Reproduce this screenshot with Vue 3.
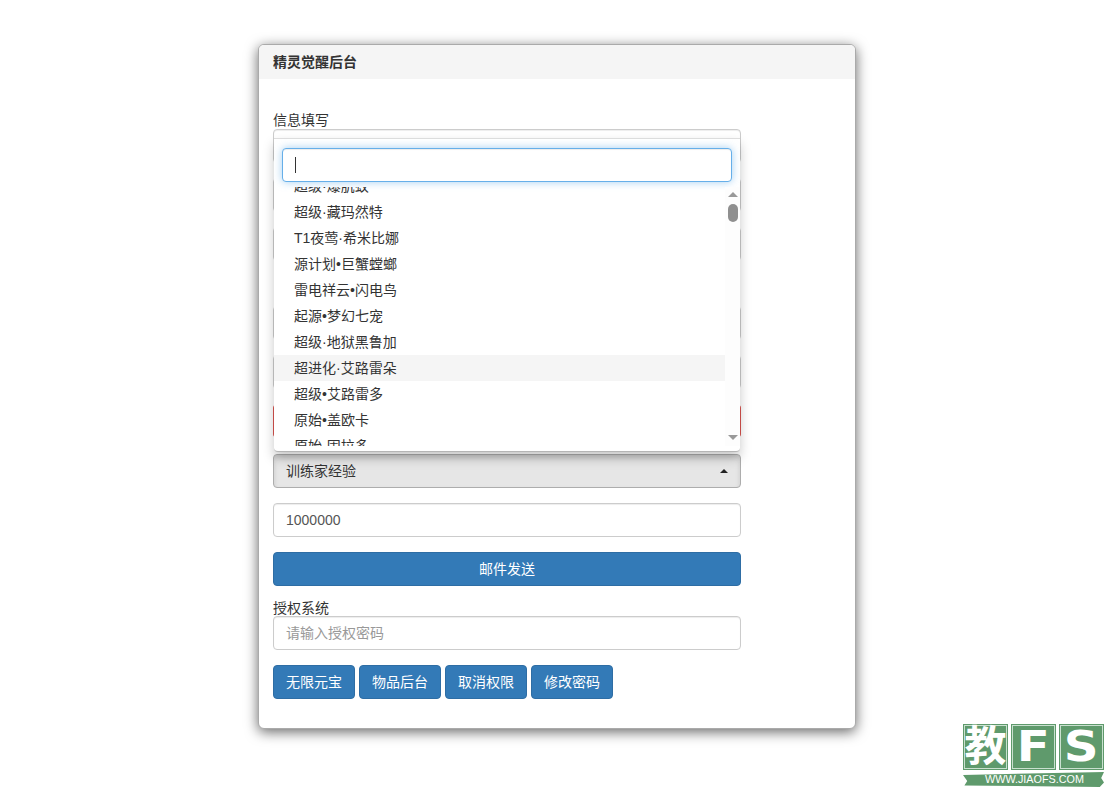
<script setup>
import { ref } from 'vue'

const pets = ref([
  '超级·爆肌蚊',
  '超级·藏玛然特',
  'T1夜莺·希米比娜',
  '源计划•巨蟹螳螂',
  '雷电祥云•闪电鸟',
  '起源•梦幻七宠',
  '超级·地狱黑鲁加',
  '超进化·艾路雷朵',
  '超级•艾路雷多',
  '原始•盖欧卡',
  '原始·固拉多'
])
const activeIndex = ref(7)
const amount = ref('1000000')
const actions = ['无限元宝', '物品后台', '取消权限', '修改密码']
</script>

<template>
  <div class="page">
    <div class="panel">
      <div class="panel-heading">精灵觉醒后台</div>
      <div class="panel-body">
        <label class="label">信息填写</label>
        <div class="control"></div>
        <div class="control"></div>
        <div class="control"></div>
        <div class="label label-mid"></div>
        <div class="control"></div>
        <div class="control"></div>
        <div class="btn btn-danger"></div>

        <div class="control control-open">
          <span>训练家经验</span>
          <i class="caret"></i>
        </div>
        <input class="control input" v-model="amount" type="text" />
        <button class="btn btn-primary btn-block" type="button">邮件发送</button>

        <label class="label label-auth">授权系统</label>
        <input class="control input" type="text" placeholder="请输入授权密码" />
        <div class="actions">
          <button v-for="a in actions" :key="a" class="btn btn-primary btn-action" type="button">{{ a }}</button>
        </div>

        <!-- 下拉菜单 -->
        <div class="dropdown">
          <div class="search">
            <input class="search-input" type="text" />
            <span class="cursor"></span>
          </div>
          <div class="list-wrap">
            <ul class="list">
              <li v-for="(p, i) in pets" :key="p" :class="{ active: i === activeIndex }">{{ p }}</li>
            </ul>
            <div class="scrollbar">
              <i class="arrow-up"></i>
              <i class="thumb"></i>
              <i class="arrow-down"></i>
            </div>
          </div>
        </div>
      </div>
    </div>

    <div class="logo">
      <div class="logo-blocks">
        <span class="logo-cell">教</span>
        <span class="logo-cell"><b class="wide">F</b></span>
        <span class="logo-cell"><b class="wide">S</b></span>
      </div>
      <div class="logo-url">WWW.JIAOFS.COM</div>
    </div>
  </div>
</template>

<style>
html, body {
  margin: 0;
  background: #fff;
  overflow: hidden;
}
</style>

<style scoped>
* {
  box-sizing: border-box;
}

.page {
  position: relative;
  width: 1110px;
  height: 791px;
  padding: 44px 0 0 258px;
  font-family: "Liberation Sans", "Noto Sans CJK SC", sans-serif;
  font-size: 14px;
  color: #333;
}

/* 面板 */
.panel {
  width: 598px;
  height: 685px;
  background: #fff;
  border-radius: 6px;
  border: 1px solid #aaa;
  box-shadow: 0 3px 13px rgba(0, 0, 0, 0.6);
}

.panel-heading {
  height: 34px;
  padding: 0 14px;
  line-height: 34px;
  font-weight: 700;
  font-size: 14px;
  background: #f5f5f5;
  border-radius: 5px 5px 0 0;
}

.panel-body {
  position: relative;
  width: 496px;
  padding: 33px 0 0 14px;
}

.label {
  display: block;
  height: 17px;
  line-height: 17px;
}

.label-mid {
  height: 30px;
}

.label-auth {
  height: 16px;
  margin-top: -1px;
}

.control {
  display: block;
  width: 468px;
  height: 34px;
  margin-bottom: 15px;
  padding: 6px 12px;
  font: inherit;
  line-height: 20px;
  color: #555;
  background: #fff;
  border: 1px solid #ccc;
  border-radius: 4px;
  box-shadow: inset 0 1px 1px rgba(0, 0, 0, 0.075);
  outline: none;
}

.input::placeholder {
  color: #999;
}

.control-open {
  display: flex;
  align-items: center;
  justify-content: space-between;
  color: #333;
  background: #e6e6e6;
  border-color: #adadad;
  box-shadow: inset 0 3px 5px rgba(0, 0, 0, 0.125);
}

.caret {
  width: 0;
  height: 0;
  border-left: 4px solid transparent;
  border-right: 4px solid transparent;
  border-bottom: 4px solid #222;
}

.btn {
  height: 34px;
  padding: 6px 12px;
  font: inherit;
  line-height: 20px;
  border: 1px solid transparent;
  border-radius: 4px;
}

.btn-danger {
  width: 468px;
  margin-bottom: 16px;
  background: #c9302c;
  border-color: #d9534f;
}

.btn-primary {
  color: #fff;
  background: #337ab7;
  border-color: #2e6da4;
}

.btn-block {
  display: block;
  width: 468px;
  margin-bottom: 15px;
  text-align: center;
}

.actions {
  display: flex;
  gap: 4px;
}

.btn-action {
  width: 82px;
  padding: 6px 0;
  text-align: center;
}

/* 下拉菜单 */
.dropdown {
  position: absolute;
  top: 59px;
  left: 15px;
  width: 466px;
  height: 314px;
  background: #fff;
  border-top: 1px solid #ddd;
  border-bottom: 1px solid #b5b5b5;
  border-radius: 0 0 4px 4px;
  box-shadow: 0 6px 12px rgba(0, 0, 0, 0.22);
}

.search {
  position: relative;
  padding: 9px 8px 0;
}

.search-input {
  display: block;
  width: 450px;
  height: 34px;
  padding: 6px 12px;
  border: 1px solid #66afe9;
  border-radius: 4px;
  outline: none;
  box-shadow: inset 0 1px 1px rgba(0, 0, 0, 0.075), 0 0 8px rgba(102, 175, 233, 0.6);
}

.cursor {
  position: absolute;
  left: 21px;
  top: 18px;
  width: 1px;
  height: 16px;
  background: #333;
}

.list-wrap {
  position: relative;
  height: 259px;
  margin-top: 5px;
  overflow: hidden;
}

.list {
  list-style: none;
  margin: -14px 0 0;
  padding: 0;
  width: 451px;
}

.list li {
  height: 26px;
  padding: 0 20px;
  line-height: 26px;
  white-space: nowrap;
  color: #333;
}

.list li.active {
  background: #f5f5f5;
}

.scrollbar {
  position: absolute;
  top: 0;
  right: 0;
  width: 15px;
  height: 100%;
  background: #fdfdfd;
}

.arrow-up,
.arrow-down {
  position: absolute;
  left: 3px;
  width: 0;
  height: 0;
  border-left: 5px solid transparent;
  border-right: 5px solid transparent;
}

.arrow-up {
  top: 5px;
  border-bottom: 5px solid #999;
}

.arrow-down {
  bottom: 6px;
  border-top: 5px solid #999;
}

.thumb {
  position: absolute;
  top: 17px;
  left: 3px;
  width: 10px;
  height: 18px;
  background: #8f8f8f;
  border-radius: 5px;
}

/* 角标 */
.logo {
  position: absolute;
  left: 963px;
  top: 724px;
  width: 141px;
}

.logo-blocks {
  display: flex;
  gap: 3px;
}

.logo-cell {
  width: 45px;
  height: 46px;
  background: #5f9a6c;
  color: #fff;
  font-family: "DejaVu Sans", "Noto Sans CJK SC", sans-serif;
  font-weight: 700;
  font-size: 42px;
  line-height: 45px;
  text-align: center;
  box-shadow: inset 0 0 0 1px #5f9a6c, inset 0 0 0 2px #c9e0cf;
}

.wide {
  display: inline-block;
  transform: scaleX(1.15);
}

.logo-url {
  height: 15px;
  margin-top: 2px;
  padding-left: 22px;
  background: #5f9a6c;
  color: #fff;
  font-size: 10.8px;
  line-height: 15px;
  white-space: nowrap;
  clip-path: polygon(0 20%, 100% 0, 98% 40%, 100% 70%, 97% 100%, 1% 90%, 3% 60%);
}
</style>
